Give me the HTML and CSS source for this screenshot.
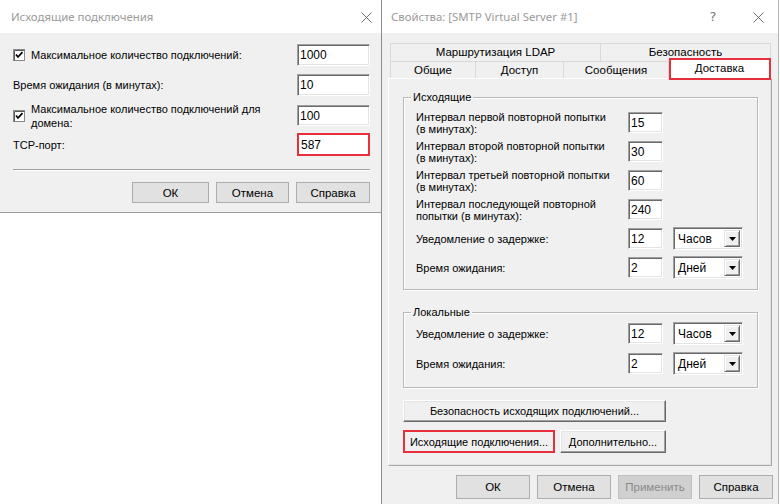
FILE: index.html
```html
<!DOCTYPE html>
<html lang="ru">
<head>
<meta charset="utf-8">
<title>SMTP</title>
<link rel="stylesheet" href="styles.css">
</head>
<body>
<div class="screen">
  <div class="dlg dlg-left">
    <div class="titlebar tb-left">
      <span class="title">Исходящие подключения</span>
      <span class="tb-close"><svg width="11" height="11" viewBox="0 0 11 11"><path d="M0.5 0.5 L10.5 10.5 M10.5 0.5 L0.5 10.5" stroke="#6f6f6f" stroke-width="1" fill="none"/></svg></span>
    </div>
    <div class="lbody">
      <div class="lrow r1">
        <div class="chklabel">
          <svg class="chk" width="12" height="12" viewBox="0 0 12 12"><rect x="0.5" y="0.5" width="11" height="11" fill="#fff" stroke="#8a8a8a"/><path d="M1.5 11.5 V1.5 H11.5" stroke="#5a5a5a" fill="none"/><path d="M3 5.5 L5 8 L9.5 3.2" stroke="#000" stroke-width="1.8" fill="none"/></svg>
          <span>Максимальное количество подключений:</span>
        </div>
        <div class="inp lw">1000</div>
      </div>
      <div class="lrow r2">
        <span class="plain">Время ожидания (в минутах):</span>
        <div class="inp lw">10</div>
      </div>
      <div class="lrow r3">
        <div class="chklabel">
          <svg class="chk" width="12" height="12" viewBox="0 0 12 12"><rect x="0.5" y="0.5" width="11" height="11" fill="#fff" stroke="#8a8a8a"/><path d="M1.5 11.5 V1.5 H11.5" stroke="#5a5a5a" fill="none"/><path d="M3 5.5 L5 8 L9.5 3.2" stroke="#000" stroke-width="1.8" fill="none"/></svg>
          <span class="two">Максимальное количество подключений для<br>домена:</span>
        </div>
        <div class="inp lw">100</div>
      </div>
      <div class="lrow r4">
        <span class="plain">TCP-порт:</span>
        <div class="inp lw hl">587</div>
      </div>
      <div class="sep"></div>
      <div class="lbtns">
        <button class="wbtn">ОК</button>
        <button class="wbtn">Отмена</button>
        <button class="wbtn">Справка</button>
      </div>
    </div>
  </div>

  <div class="dlg dlg-right">
    <div class="titlebar tb-right">
      <span class="title">Свойства: [SMTP Virtual Server #1]</span>
      <span class="tb-help">?</span>
      <span class="tb-close2"><svg width="11" height="11" viewBox="0 0 11 11"><path d="M0.5 0.5 L10.5 10.5 M10.5 0.5 L0.5 10.5" stroke="#6f6f6f" stroke-width="1" fill="none"/></svg></span>
    </div>
    <div class="rbody">
      <div class="tabs">
        <div class="tabrow row1">
          <div class="tab t-ldap">Маршрутизация LDAP</div>
          <div class="tab t-sec">Безопасность</div>
        </div>
        <div class="tabrow row2">
          <div class="tab t-gen">Общие</div>
          <div class="tab t-acc">Доступ</div>
          <div class="tab t-msg">Сообщения</div>
          <div class="tab t-del sel">Доставка</div>
        </div>
      </div>
      <div class="panel">
        <div class="group g1">
          <span class="legend">Исходящие</span>
          <div class="grow">
            <span class="glabel">Интервал первой повторной попытки<br>(в минутах):</span>
            <div class="inp rw">15</div>
          </div>
          <div class="grow">
            <span class="glabel">Интервал второй повторной попытки<br>(в минутах):</span>
            <div class="inp rw">30</div>
          </div>
          <div class="grow">
            <span class="glabel">Интервал третьей повторной попытки<br>(в минутах):</span>
            <div class="inp rw">60</div>
          </div>
          <div class="grow">
            <span class="glabel">Интервал последующей повторной<br>попытки (в минутах):</span>
            <div class="inp rw">240</div>
          </div>
          <div class="grow">
            <span class="glabel">Уведомление о задержке:</span>
            <div class="inp rw">12</div>
            <div class="combo"><span class="cval">Часов</span><span class="cbtn"><svg width="7" height="4" viewBox="0 0 7 4"><path d="M0 0 H7 L3.5 4 Z" fill="#000"/></svg></span></div>
          </div>
          <div class="grow">
            <span class="glabel">Время ожидания:</span>
            <div class="inp rw">2</div>
            <div class="combo"><span class="cval">Дней</span><span class="cbtn"><svg width="7" height="4" viewBox="0 0 7 4"><path d="M0 0 H7 L3.5 4 Z" fill="#000"/></svg></span></div>
          </div>
        </div>
        <div class="group g2">
          <span class="legend">Локальные</span>
          <div class="grow">
            <span class="glabel">Уведомление о задержке:</span>
            <div class="inp rw">12</div>
            <div class="combo"><span class="cval">Часов</span><span class="cbtn"><svg width="7" height="4" viewBox="0 0 7 4"><path d="M0 0 H7 L3.5 4 Z" fill="#000"/></svg></span></div>
          </div>
          <div class="grow">
            <span class="glabel">Время ожидания:</span>
            <div class="inp rw">2</div>
            <div class="combo"><span class="cval">Дней</span><span class="cbtn"><svg width="7" height="4" viewBox="0 0 7 4"><path d="M0 0 H7 L3.5 4 Z" fill="#000"/></svg></span></div>
          </div>
        </div>
        <button class="cbtn3d b-sec">Безопасность исходящих подключений...</button>
        <div class="pbtns">
          <button class="cbtn3d b-out hlbtn">Исходящие подключения...</button>
          <button class="cbtn3d b-adv">Дополнительно...</button>
        </div>
      </div>
      <div class="rfoot">
        <button class="wbtn fb">ОК</button>
        <button class="wbtn fb">Отмена</button>
        <button class="wbtn fb dis">Применить</button>
        <button class="wbtn fb">Справка</button>
      </div>
    </div>
  </div>
</div>
</body>
</html>
```

FILE: styles.css
```css
* { box-sizing: border-box; }
html, body { margin: 0; padding: 0; background: #fff; }
body {
  font-family: "Liberation Sans", Arial, sans-serif;
  font-size: 11px;
  color: #000;
}
.screen {
  display: flex;
  align-items: flex-start;
  width: 780px;
  height: 504px;
  overflow: hidden;
}
.dlg { background: #f0f0f0; }

/* title bars */
.titlebar {
  height: 33px;
  background: #fff;
  display: flex;
  align-items: center;
}
.title {
  font-family: "Noto Sans", "Open Sans", sans-serif;
  font-size: 11.4px;
  color: #9a9a9a;
  flex: 1;
  white-space: nowrap;
}
.tb-left { padding-left: 11px; }
.tb-close { width: 30px; display: flex; justify-content: center; padding-top: 2px; }
.tb-right { padding-left: 9px; }
.tb-help {
  width: 40px;
  text-align: center;
  font-family: "DejaVu Sans", sans-serif;
  font-size: 13px;
  color: #7a7a7a;
  margin-right: 5px;
}
.tb-close2 { width: 40px; display: flex; justify-content: center; padding-top: 2px; }

/* left dialog */
.dlg-left {
  width: 381px;
  height: 213px;
  border-bottom: 1px solid #9d9d9d;
}
.lbody {
  padding: 11px 11px 0 13px;
}
.lrow {
  display: flex;
  align-items: center;
  justify-content: space-between;
}
.r1 { height: 22px; }
.r2 { height: 22px; margin-top: 8px; }
.r3 { height: 21px; margin-top: 9px; }
.r4 { height: 23px; margin-top: 7px; }
.chklabel { display: flex; align-items: center; }
.chk { flex: none; margin-right: 6px; }
.two { line-height: 14px; }
.lw { width: 73px; height: 22px; }
.r3 .lw { height: 21px; }
.sep {
  margin-top: 13px;
  height: 2px;
  border-top: 1px solid #a0a0a0;
  border-bottom: 1px solid #fff;
}
.lbtns {
  display: flex;
  justify-content: flex-end;
  gap: 7px;
  margin-top: 11px;
}
.lbtns .wbtn { height: 21px; }
.lbtns .wbtn:first-child { width: 77px; }
.lbtns .wbtn:nth-child(2) { width: 73px; }
.lbtns .wbtn:nth-child(3) { width: 74px; }

/* inputs */
.inp {
  background: #fff;
  border-top: 1px solid #a0a0a0;
  border-left: 1px solid #a0a0a0;
  border-right: 1px solid #fff;
  border-bottom: 1px solid #fff;
  box-shadow: inset 1px 1px 0 #696969, inset -1px -1px 0 #e3e3e3;
  padding: 3px 0 0 2px;
  font-size: 12px;
  line-height: 14px;
  flex: none;
}
.hl {
  border: 2px solid #e8303d;
  box-shadow: none;
  height: 23px;
  padding-top: 3px;
}

/* buttons */
button {
  font-family: inherit;
  font-size: 11px;
  color: #000;
  padding: 0;
  margin: 0;
  cursor: default;
}
.wbtn {
  background: #e1e1e1;
  border: 1px solid #adadad;
  font-size: 11.5px;
}
.wbtn.dis {
  background: #d0d0d0;
  border-color: #c0c0c0;
  color: #8a8a8a;
}
.cbtn3d {
  background: #f0f0f0;
  border-top: 1px solid #fff;
  border-left: 1px solid #fff;
  border-right: 1px solid #696969;
  border-bottom: 1px solid #696969;
  box-shadow: inset -1px -1px 0 #a0a0a0, inset 1px 1px 0 #e3e3e3;
}

/* right dialog */
.dlg-right {
  width: 398px;
  height: 504px;
  border-left: 1px solid #8c8c8c;
  border-right: 1px solid #b5b5b5;
}
.rbody {
  height: 471px;
  padding-top: 10px;
}
.tabs {
  margin-left: 8px;
  width: 381px;
  position: relative;
  z-index: 2;
}
.tabrow { display: flex; }
.row1 { height: 18px; }
.row2 { height: 17px; }
.tab {
  border: 1px solid #d9d9d9;
  border-bottom: none;
  margin-right: -1px;
  background: #f0f0f0;
  text-align: center;
  line-height: 17px;
  white-space: nowrap;
  font-size: 11.5px;
}
.row2 .tab { line-height: 16px; }
.t-ldap { width: 211px; }
.t-sec { width: 171px; }
.t-gen { width: 86px; }
.t-acc { width: 89px; }
.t-msg { width: 106px; }
.t-del { width: 103px; }
.tab.sel {
  position: relative;
  background: #fff;
  margin-top: -2px;
  height: 20px;
  line-height: 17px;
  border-color: #d9d9d9;
}
.tab.sel::after {
  content: "";
  position: absolute;
  top: -2px;
  left: 0;
  right: -1px;
  bottom: -1px;
  border: 2px solid #e8303d;
}
.panel {
  margin-left: 6px;
  width: 384px;
  height: 388px;
  border-top: 1px solid #fff;
  border-left: 1px solid #fff;
  border-right: 1px solid #a8a8a8;
  border-bottom: 1px solid #a8a8a8;
  box-shadow: inset -1px -1px 0 #e3e3e3;
  padding: 18px 0 0 14px;
  position: relative;
  z-index: 1;
}
.group {
  position: relative;
  width: 355px;
  border: 1px solid #b9b9b9;
  box-shadow: inset 1px 1px 0 #fff, 1px 1px 0 #fff;
  padding-left: 12px;
}
.legend {
  position: absolute;
  top: -7px;
  left: 7px;
  padding: 0 2px;
  background: #f0f0f0;
  line-height: 13px;
}
.g1 { height: 193px; padding-top: 14px; }
.g2 { height: 76px; margin-top: 22px; padding-top: 10px; }
.grow {
  display: flex;
  align-items: center;
  height: 21px;
  margin-bottom: 8px;
}
.g2 .grow { margin-bottom: 9px; }
.glabel {
  width: 212px;
  line-height: 12px;
  flex: none;
}
.rw { width: 35px; height: 21px; }
.combo {
  margin-left: 10px;
  width: 70px;
  height: 23px;
  background: #fff;
  border-top: 1px solid #a0a0a0;
  border-left: 1px solid #a0a0a0;
  border-right: 1px solid #fff;
  border-bottom: 1px solid #fff;
  box-shadow: inset 1px 1px 0 #696969, inset -1px -1px 0 #e3e3e3;
  display: flex;
  align-items: stretch;
  padding: 2px;
  font-size: 12px;
}
.cval { flex: 1; padding-left: 2px; line-height: 18px; }
.cbtn {
  width: 16px;
  background: #f0f0f0;
  border-top: 1px solid #e3e3e3;
  border-left: 1px solid #e3e3e3;
  border-right: 1px solid #696969;
  border-bottom: 1px solid #696969;
  box-shadow: inset 1px 1px 0 #fff, inset -1px -1px 0 #a0a0a0;
  display: flex;
  align-items: center;
  justify-content: center;
}
.b-sec {
  display: block;
  margin-top: 12px;
  width: 263px;
  height: 22px;
}
.pbtns {
  display: flex;
  gap: 5px;
  margin-top: 8px;
}
.b-out { width: 152px; height: 23px; }
.b-adv { width: 106px; height: 23px; }
.hlbtn {
  border: 2px solid #e8303d;
  box-shadow: none;
}
.rfoot {
  display: flex;
  justify-content: flex-end;
  gap: 7px;
  margin-top: 9px;
  padding-right: 5px;
}
.fb { width: 74px; height: 24px; }
```
